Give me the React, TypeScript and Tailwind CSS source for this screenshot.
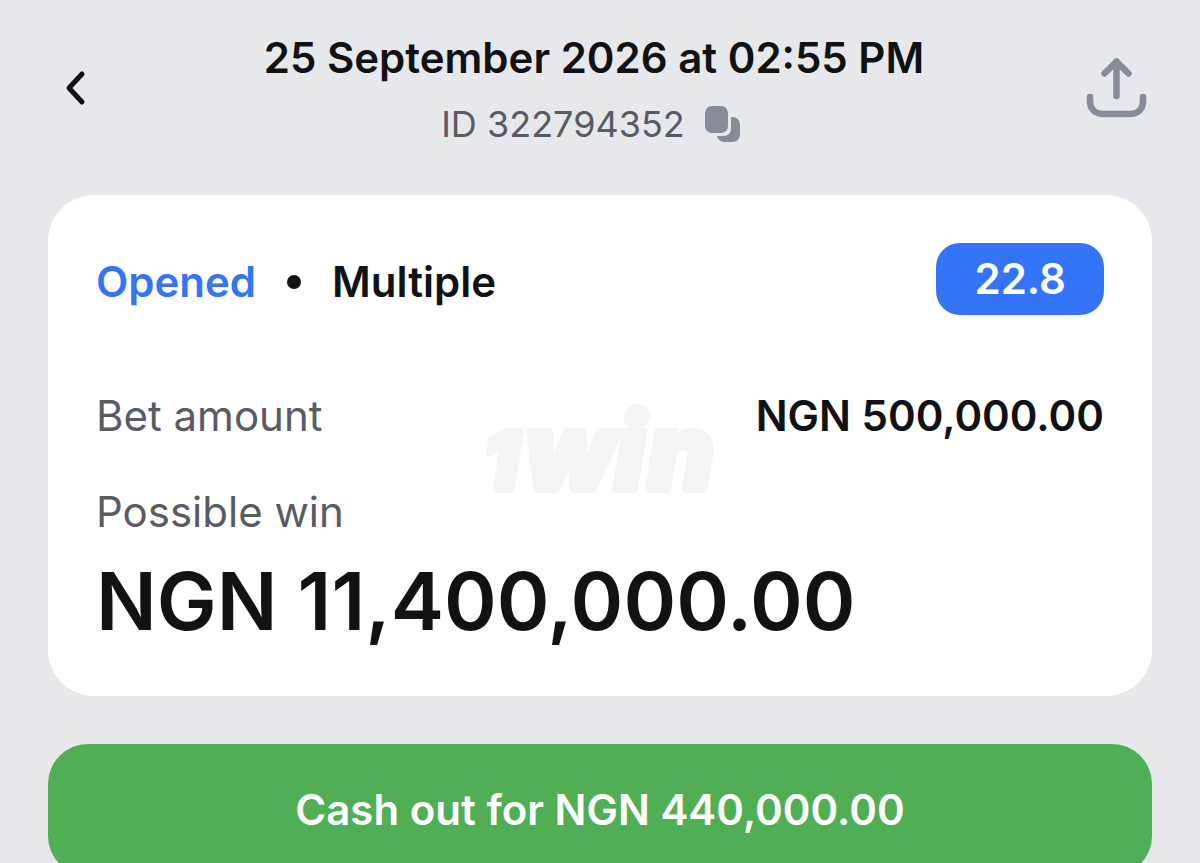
import type { ReactNode } from 'react';

function BackIcon() {
  return (
    <svg width="24" height="40" viewBox="0 0 24 40" fill="none" aria-hidden="true">
      <path
        d="M18 6 5 20l13 14"
        stroke="currentColor"
        strokeWidth="5"
        strokeLinecap="round"
        strokeLinejoin="round"
      />
    </svg>
  );
}

function ShareIcon() {
  return (
    <svg width="64" height="64" viewBox="0 0 64 64" fill="none" aria-hidden="true">
      <g stroke="currentColor" strokeWidth="6.5" strokeLinecap="round" strokeLinejoin="round">
        <path d="M32.5 40V5.5M20.5 17.5l12-12 12 12" />
        <path d="M6 41v4c0 8 5 13 13 13h27c8 0 13-5 13-13v-4" />
      </g>
    </svg>
  );
}

function CopyIcon() {
  return (
    <svg width="36" height="36" viewBox="0 0 36 36" fill="currentColor" aria-hidden="true">
      <rect x="0" y="0" width="23" height="27" rx="7" />
      <path d="M26 11h1c5 0 8 3 8 8v9c0 5-3 8-8 8h-6c-5 0-8-2-9-6h6c5 0 8-3 8-8V11Z" />
    </svg>
  );
}

// Faint brand mark behind the bet details
function Watermark() {
  return (
    <svg
      className="pointer-events-none absolute top-1/2 left-1/2 -translate-1/2"
      width="260"
      height="140"
      viewBox="0 0 260 140"
      aria-hidden="true"
    >
      <text
        y="113"
        fill="#f4f4f4"
        stroke="#f4f4f4"
        strokeWidth="8"
        strokeLinejoin="round"
        fontFamily="Inter, sans-serif"
        fontWeight="800"
        fontStyle="italic"
      >
        <tspan x="14" fontSize="78">1</tspan>
        <tspan x="55 145 178" fontSize="104">win</tspan>
      </text>
    </svg>
  );
}

function Row({ label, children }: { label: string; children: ReactNode }) {
  return (
    <div className="flex items-center justify-between">
      <dt className="text-[#585b64]">{label}</dt>
      <dd className="font-semibold">{children}</dd>
    </div>
  );
}

export default function App() {
  return (
    <main className="min-h-screen bg-[#e7e8ec] px-12 pt-8 pb-12 font-['Inter',sans-serif] text-[42px] leading-[52px] text-[#111214]">
      <header className="flex items-center justify-between px-4">
        <button type="button" aria-label="Back" className="w-10">
          <BackIcon />
        </button>
        <div className="text-center">
          <h1 className="font-semibold">25 September 2026 at 02:55 PM</h1>
          <div className="mt-5 flex items-center justify-center gap-5 pr-1.5 text-4xl text-[#585b64]">
            <span>ID 322794352</span>
            <button type="button" aria-label="Copy ID" className="text-[#888c99]">
              <CopyIcon />
            </button>
          </div>
        </div>
        <button type="button" aria-label="Share" className="-mr-3 text-[#888c99]">
          <ShareIcon />
        </button>
      </header>

      <section className="relative mt-[51px] rounded-[46px] bg-white p-12">
        <Watermark />
        <div className="relative">
          <div className="flex items-end justify-between font-semibold">
            <div className="flex items-center gap-[31px] leading-[66px]">
              <span className="text-[#3374f8]">Opened</span>
              <span className="size-3.5 rounded-full bg-[#111214]" />
              <span>Multiple</span>
            </div>
            <span className="rounded-3xl bg-[#3374f8] px-[38px] py-[10px] text-white">22.8</span>
          </div>
          <dl className="mt-[75px]">
            <Row label="Bet amount">NGN 500,000.00</Row>
            <div className="mt-11">
              <dt className="text-[#585b64]">Possible win</dt>
              <dd className="mt-4 text-[80px] leading-[94px] font-semibold">
                NGN 11,400,000.00
              </dd>
            </div>
          </dl>
        </div>
      </section>

      <button
        type="button"
        className="mt-12 w-full rounded-[40px] bg-[#50ae55] py-10 font-semibold text-white"
      >
        Cash out for NGN 440,000.00
      </button>
    </main>
  );
}
